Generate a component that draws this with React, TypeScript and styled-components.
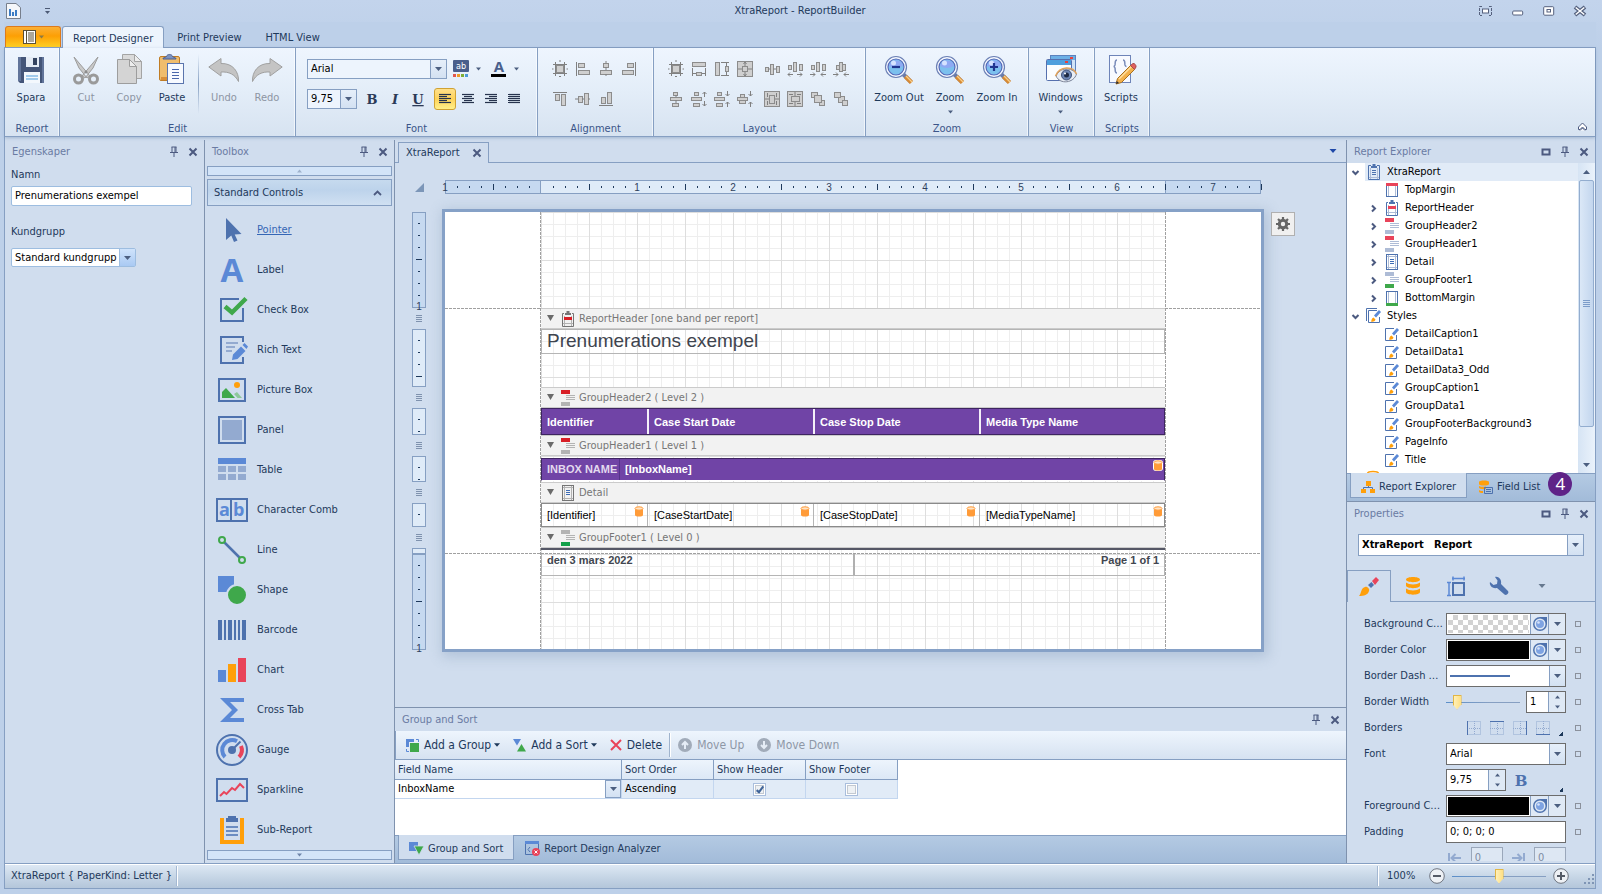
import React from 'react';
import styled, { createGlobalStyle, css } from 'styled-components';

const ui = '"DejaVu Sans Condensed", "DejaVu Sans", sans-serif';
const arial = '"Liberation Sans", Arial, sans-serif';

const c = {
  frame: '#bdd0e9',
  panel: '#d0ddee',
  line: '#869fc2',
  divider: '#7f92ae',
  text: '#1e395b',
  muted: '#6a7ba3',
  blue: '#4e72ae',
  sky: '#5b89d6',
  pale: '#93aad0',
  green: '#3fa84b',
  orange: '#ff9f0a',
  red: '#e9445a',
  purple: '#7044a6',
};

const GlobalStyle = createGlobalStyle`
  *, *::before, *::after { box-sizing: border-box; }
  body { margin: 0; background: ${c.frame}; }
  button, input, select { font: inherit; color: inherit; margin: 0; }
  svg { display: block; flex: none; overflow: visible; }
`;

/* ---------- window frame ---------- */

const Window = styled.div`
  display: flex;
  flex-direction: column;
  height: 100vh;
  min-height: 720px;
  padding: 0 6px 5px 4px;
  font: 11px/14px ${ui};
  color: ${c.text};
  background: linear-gradient(#c3d4ec, ${c.frame} 48px);
`;

const TitleBar = styled.header`
  display: grid;
  grid-template-columns: 150px 1fr 150px;
  align-items: center;
  height: 22px;
  flex: none;
`;

const QuickAccess = styled.div`
  display: flex;
  align-items: center;
  gap: 24px;
  padding-left: 1px;
`;

const WindowTitle = styled.h1`
  margin: 0;
  font: inherit;
  text-align: center;
`;

const WindowButtons = styled.div`
  display: flex;
  justify-content: flex-end;
  gap: 19px;
  padding-right: 10px;
`;

const PlainButton = styled.button`
  display: flex;
  align-items: center;
  justify-content: center;
  flex: none;
  padding: 0;
  border: 0;
  background: none;
`;

const Body = styled.div`
  display: flex;
  flex-direction: column;
  flex: 1;
  min-height: 0;
  border: solid ${c.line};
  border-width: 0 1px 1px;
  background: ${c.panel};
`;

/* ---------- ribbon ---------- */

const RibbonTabs = styled.nav`
  display: flex;
  align-items: flex-end;
  height: 26px;
  margin: 0 -1px;
  padding-left: 1px;
  flex: none;
  background: ${c.frame};
  border-bottom: 1px solid ${c.line};
`;

const FileButton = styled.button`
  display: flex;
  align-items: center;
  justify-content: center;
  gap: 2px;
  width: 56px;
  height: 21px;
  padding: 0;
  border: 1px solid #dd7a1c;
  border-bottom: 0;
  border-radius: 3px 3px 0 0;
  background: linear-gradient(#fbb035, #fd9f04 45%, #fecf24);
`;

const RibbonTab = styled.button<{ $active?: boolean }>`
  height: 22px;
  padding: 3px 10px 0;
  margin-left: ${(p) => (p.$active ? 1 : 0)}px;
  margin-right: 2px;
  border: 1px solid transparent;
  border-bottom: 0;
  background: none;
  ${(p) =>
    p.$active &&
    css`
      margin-bottom: -1px;
      border-color: ${c.line};
      border-radius: 3px 3px 0 0;
      background: #edf4fd;
    `}
`;

const Ribbon = styled.div`
  display: flex;
  height: 89px;
  flex: none;
  background: linear-gradient(#eef5fe, #e3edf8 50%, #d7e3f1);
  border-bottom: 1px solid ${c.line};
  box-shadow: 0 1px 3px rgba(90, 120, 160, 0.4);
`;

const Group = styled.section<{ $w: number }>`
  display: flex;
  flex-direction: column;
  justify-content: space-between;
  width: ${(p) => p.$w}px;
  flex: none;
  border-right: 1px solid ${c.line};
  box-shadow: inset -1px 0 rgba(255, 255, 255, 0.6);
`;

const GroupName = styled.div`
  text-align: center;
  color: #3b5589;
`;

const BigRow = styled.div`
  display: flex;
  justify-content: center;
  padding: 6px 2px 0 0;
`;

const BigButton = styled.button<{ $w?: number }>`
  display: flex;
  flex-direction: column;
  align-items: center;
  gap: 5px;
  width: ${(p) => p.$w ?? 43}px;
  padding: 0;
  border: 0;
  background: none;
  white-space: nowrap;
  &:disabled { color: #8d95a3; }
`;

const RibbonRule = styled.span`
  width: 1px;
  height: 60px;
  margin: 0 4px;
  background: linear-gradient(transparent, ${c.line}, transparent);
`;

const ToolGrid = styled.div<{ $pad: number }>`
  display: flex;
  flex-direction: column;
  gap: 8px;
  padding: 10px 0 0 ${(p) => p.$pad}px;
`;

const ToolRow = styled.div`
  display: flex;
  align-items: center;
  height: 22px;
  gap: 1px;
`;

const ToolButton = styled.button<{ $on?: boolean }>`
  display: flex;
  align-items: center;
  justify-content: center;
  width: 22px;
  height: 22px;
  padding: 0;
  border: 1px solid ${(p) => (p.$on ? '#d0a233' : 'transparent')};
  border-radius: 3px;
  background: ${(p) => (p.$on ? 'linear-gradient(#ffe08a, #ffd35a 50%, #fff08a)' : 'none')};
`;

const ToolGap = styled.span<{ $w: number }>`
  width: ${(p) => p.$w}px;
`;

const Collapse = styled.div`
  display: flex;
  flex: 1;
  align-items: flex-end;
  justify-content: flex-end;
  padding: 0 7px 4px;
`;

/* ---------- form parts ---------- */

const Combo = styled.span<{ $w?: number; $h?: number; $edge?: string; $bg?: string; $radius?: number }>`
  display: flex;
  width: ${(p) => (p.$w ? `${p.$w}px` : '100%')};
  height: ${(p) => p.$h ?? 20}px;
  flex: none;
  border: 1px solid ${(p) => p.$edge ?? c.line};
  border-radius: ${(p) => p.$radius ?? 0}px;
  background: ${(p) => p.$bg ?? '#fff'};
  color: #000;
`;

const Select = styled.select<{ $bold?: boolean }>`
  appearance: none;
  flex: 1;
  min-width: 0;
  padding: 0 0 0 3px;
  border: 0;
  outline: 0;
  border-radius: 0;
  background: none;
  font-weight: ${(p) => (p.$bold ? 700 : 400)};
`;

const DropArrow = styled.span<{ $w?: number; $edge?: string; $vivid?: boolean }>`
  display: flex;
  align-items: center;
  justify-content: center;
  width: ${(p) => p.$w ?? 16}px;
  flex: none;
  border-left: 1px solid ${(p) => p.$edge ?? c.line};
  background: ${(p) => (p.$vivid ? 'linear-gradient(#cfe3fb, #a9c9f3)' : 'linear-gradient(#e6effa, #d3e1f2)')};
  pointer-events: none;
`;

const TextInput = styled.input`
  flex: 1;
  min-width: 0;
  width: 100%;
  padding: 0 3px;
  border: 0;
  outline: 0;
  background: none;
  color: #000;
`;

/* ---------- panels ---------- */

const Main = styled.main`
  display: flex;
  flex: 1;
  min-height: 0;
  padding-top: 3px;
`;

const Panel = styled.section<{ $w: number }>`
  display: flex;
  flex-direction: column;
  width: ${(p) => p.$w}px;
  flex: none;
  min-height: 0;
  border-right: 1px solid ${c.divider};
`;

const PanelHead = styled.header`
  display: flex;
  align-items: center;
  height: 23px;
  flex: none;
  gap: 9px;
  padding: 1px 6px 0 7px;
  color: ${c.muted};
`;

const PanelTitle = styled.h2`
  flex: 1;
  margin: 0;
  font: inherit;
`;

const Field = styled.label<{ $gap: number }>`
  display: flex;
  flex-direction: column;
  gap: ${(p) => p.$gap}px;
  padding: 5px 12px 14px 6px;
`;

const ToolboxScroll = styled.button`
  display: flex;
  align-items: center;
  justify-content: center;
  height: 10px;
  flex: none;
  margin: 3px 2px;
  padding: 0;
  border: 1px solid ${c.line};
  background: #d3e4f8;
`;

const ToolboxGroup = styled.button`
  display: flex;
  align-items: center;
  justify-content: space-between;
  height: 27px;
  flex: none;
  margin: 0 2px;
  padding: 0 9px 0 6px;
  border: 1px solid ${c.line};
  background: linear-gradient(#c6daee, #bdd3eb 40%, #d0e0f2);
`;

const ToolboxList = styled.ul`
  flex: 1;
  min-height: 0;
  overflow: hidden;
  margin: 0;
  padding: 4px 0 0 11px;
  list-style: none;
`;

const ToolboxItem = styled.button<{ $link?: boolean }>`
  display: flex;
  align-items: center;
  gap: 9px;
  height: 40px;
  padding: 0;
  border: 0;
  background: none;
  color: ${(p) => (p.$link ? '#3566b5' : c.text)};
  text-decoration: ${(p) => (p.$link ? 'underline' : 'none')};
`;

/* ---------- document ---------- */

const Center = styled.div`
  display: flex;
  flex-direction: column;
  flex: 1;
  min-width: 0;
`;

const DocTabs = styled.div`
  display: flex;
  align-items: flex-end;
  justify-content: space-between;
  height: 23px;
  flex: none;
  padding: 0 7px 0 3px;
  border-bottom: 1px solid ${c.line};
`;

const DocTab = styled.div`
  display: flex;
  align-items: center;
  gap: 12px;
  height: 21px;
  margin-bottom: -1px;
  padding: 0 6px 0 7px;
  border: 1px solid ${c.line};
  border-bottom: 0;
  background: ${c.panel};
`;

const DocMenu = styled(PlainButton)`
  width: 12px;
  height: 22px;
`;

const Canvas = styled.div`
  display: grid;
  grid-template-columns: 14px max-content max-content;
  grid-template-rows: 14px max-content;
  gap: 15px 16px;
  flex: 1;
  min-height: 0;
  overflow: hidden;
  padding: 17px 0 0 17px;
`;

const HRuler = styled.div`
  margin-left: 3px;
`;

const VRuler = styled.div`
  display: flex;
  flex-direction: column;
  margin-top: 3px;
`;

const VGrip = styled.div`
  display: flex;
  align-items: center;
  justify-content: center;
  height: 21px;
`;

const Paper = styled.div`
  display: grid;
  grid-template-columns: 96px 624px 96px;
  width: 822px;
  border: 3px solid #86a1c7;
  background: #fff;
  box-shadow: 2px 3px 12px 2px rgba(110, 135, 170, 0.3);
`;

const dash = '#a0a0a0';
const Margin = styled.div<{ $side: 'left' | 'right' }>`
  display: grid;
  grid-template-rows: 97px 1fr 95px;
  background: repeating-linear-gradient(${dash} 0 3px, transparent 3px 4px)
    ${(p) => (p.$side === 'left' ? 'right' : 'left')} / 1px 100% no-repeat;
`;

const MarginPart = styled.div<{ $dashed?: boolean }>`
  background: ${(p) =>
    p.$dashed ? `repeating-linear-gradient(90deg, ${dash} 0 3px, transparent 3px 4px) bottom / 100% 1px no-repeat` : 'none'};
`;

const Band = styled.div<{ $h: number }>`
  display: flex;
  flex-direction: column;
  height: ${(p) => p.$h}px;
  background:
    linear-gradient(90deg, #dedede 1px, transparent 1px) 0 0 / 48px 48px,
    linear-gradient(#dedede 1px, transparent 1px) 0 0 / 48px 48px,
    linear-gradient(90deg, #eeeeee 1px, transparent 1px) 0 0 / 12px 12px,
    linear-gradient(#eeeeee 1px, transparent 1px) 0 0 / 12px 12px;
`;

const BandHead = styled.div`
  display: flex;
  align-items: center;
  gap: 6px;
  height: 21px;
  padding-left: 6px;
  border: solid #cbcbcb;
  border-width: 1px 0;
  background: #f2f2f2;
  color: #767676;
`;

const BandName = styled.span`
  margin-left: -3px;
`;

const ReportTitle = styled.div`
  height: 25px;
  padding-left: 5px;
  border: 1px solid #b5b5b5;
  font: 19px/22px ${arial};
  color: #3e444e;
`;

const bandTable = css`
  width: 100%;
  table-layout: fixed;
  border-spacing: 0;
  font: 11px/14px ${arial};
  text-align: left;
`;

const HeaderTable = styled.table`
  ${bandTable}
  height: 27px;
  border: 1px solid #3e2561;
  background: ${c.purple};
  color: #fff;
  th { padding: 0 5px; font-weight: 700; }
  th + th { border-left: 2px solid #f4f0f8; }
`;

const GroupTable = styled.table`
  ${bandTable}
  height: 23px;
  margin-top: 2px;
  border: 1px solid #3e2561;
  border-bottom: 1px solid #fff;
  background: ${c.purple};
  color: #fff;
  font-weight: 700;
  th, td { position: relative; padding: 0 5px 2px; white-space: nowrap; }
  th { color: #e3d9ee; padding-right: 0; }
  td { border-left: 1px solid #56338a; }
`;

const DetailTable = styled.table`
  ${bandTable}
  height: 24px;
  border: 1px solid #8a8a8a;
  color: #000;
  td { position: relative; padding: 0 5px; }
  td + td { padding-left: 6px; border-left: 1px solid #b5b5b5; }
`;

const Bound = styled.span<{ $light?: boolean }>`
  position: absolute;
  top: ${(p) => (p.$light ? 1 : 2)}px;
  right: 3px;
  border-radius: 3px;
  background: ${(p) => (p.$light ? '#fff' : 'none')};
  td:last-child > & { right: 1px; }
`;

const FooterRule = styled.div`
  height: 2px;
  background: #555766;
`;

const DashRule = styled.div`
  height: 1px;
  margin-top: 3px;
  background: repeating-linear-gradient(90deg, ${dash} 0 3px, transparent 3px 4px);
`;

const FooterCells = styled.div`
  display: grid;
  grid-template-columns: 1fr 1fr;
  height: 22px;
  border: 1px solid #b5b5b5;
  border-top: 0;
  font: 700 11px/13px ${arial};
  color: #41464f;
`;

const FooterCell = styled.div<{ $end?: boolean }>`
  padding: 0 5px;
  text-align: ${(p) => (p.$end ? 'right' : 'left')};
  border-left: ${(p) => (p.$end ? '2px solid #b0b0b0' : '0')};
`;

const SmartTag = styled.button`
  display: flex;
  align-items: center;
  justify-content: center;
  width: 24px;
  height: 24px;
  margin: 3px 0 0 -12px;
  padding: 0;
  border: 1px solid #b0b0b0;
  background: #f0f0f0;
`;

/* ---------- group and sort ---------- */

const BottomPanel = styled.section`
  display: flex;
  flex-direction: column;
  height: 156px;
  flex: none;
  border-top: 1px solid ${c.divider};
`;

const Toolbar = styled.div`
  display: flex;
  align-items: center;
  height: 29px;
  flex: none;
  gap: 13px;
  padding-left: 10px;
  border: 1px solid ${c.line};
  border-width: 0 0 1px 1px;
  background: linear-gradient(#eef5fd, #d6e2f1);
  font-size: 12px;
`;

const ToolbarButton = styled.button`
  display: flex;
  align-items: center;
  gap: 5px;
  padding: 0;
  border: 0;
  background: none;
  &:disabled { color: #8e97a6; }
`;

const MenuCaret = styled.span`
  margin-left: -2px;
`;

const ToolbarRule = styled.span`
  width: 2px;
  height: 24px;
  margin: 0 -6px;
  background: linear-gradient(90deg, #9fb3cd 50%, #fff 50%);
`;

const TableArea = styled.div`
  flex: 1;
  background: #fff;
`;

const FieldTable = styled.table`
  width: 503px;
  table-layout: fixed;
  border-spacing: 0;
  text-align: left;
  tr { height: 19px; }
  th, td { padding: 0 3px; font-weight: 400; }
  th {
    height: 20px;
    border-right: 1px solid ${c.line};
    border-bottom: 1px solid ${c.line};
    background: linear-gradient(#edf4fc, #dce8f6);
  }
  td {
    border-right: 1px solid #c3d6ef;
    border-bottom: 1px solid #c3d6ef;
    background: #e1ebf7;
    color: #000;
  }
  td:first-child { padding: 0; background: #fff; }
`;

const FieldCell = styled.div`
  display: flex;
  height: 18px;
`;

const CellArrow = styled(DropArrow)`
  border: 1px solid ${c.line};
`;

const Check = styled.input`
  appearance: none;
  position: relative;
  display: block;
  width: 13px;
  height: 13px;
  margin: 0 auto;
  border: 1px solid #a9bedd;
  background: #eef1f4;
  box-shadow: inset 0 0 0 1px #fff, inset 0 0 0 2px #c3c9d1;
  &:checked::after {
    content: '';
    position: absolute;
    left: 4px;
    top: 1px;
    width: 4px;
    height: 8px;
    border: solid #3f6499;
    border-width: 0 2px 2px 0;
    transform: rotate(38deg);
  }
`;

const TabStrip = styled.div`
  display: flex;
  height: 28px;
  flex: none;
  padding-left: 3px;
  border-top: 1px solid ${c.line};
  background: linear-gradient(#b4cae3, #a2bbd9);
`;

const StripTab = styled.button<{ $active?: boolean }>`
  display: flex;
  align-items: center;
  gap: 4px;
  height: 25px;
  margin-top: -1px;
  padding: 3px 10px 0;
  white-space: nowrap;
  border: 1px solid ${(p) => (p.$active ? c.line : 'transparent')};
  border-top: 0;
  background: ${(p) => (p.$active ? c.panel : 'none')};
`;

/* ---------- right side ---------- */

const RightSide = styled.aside`
  display: flex;
  flex-direction: column;
  width: 249px;
  flex: none;
  border-left: 1px solid ${c.divider};
`;

const HalfPanel = styled.section<{ $ruled?: boolean }>`
  display: flex;
  flex-direction: column;
  flex: 1 1 0;
  min-height: 0;
  overflow: hidden;
  border-top: ${(p) => (p.$ruled ? `1px solid ${c.divider}` : '0')};
`;

const TreeArea = styled.div`
  display: flex;
  flex: 1;
  min-height: 0;
  background: #fff;
`;

const Tree = styled.ul`
  flex: 1;
  overflow: hidden;
  margin: 0;
  padding: 0;
  list-style: none;
  color: #000;
`;

const TreeRow = styled.li<{ $level: number; $selected?: boolean }>`
  display: flex;
  align-items: center;
  gap: 5px;
  height: 18px;
  padding-left: ${(p) => 4 + p.$level * 18}px;
  background: ${(p) => (p.$selected ? 'linear-gradient(90deg, #fff 18px, #e1ebf7 18px)' : 'none')};
`;

const TreeToggle = styled.span`
  display: flex;
  width: 10px;
`;

const ScrollBar = styled.div`
  display: flex;
  flex-direction: column;
  align-items: center;
  width: 17px;
  background: linear-gradient(90deg, #d6e4f4, #eaf2fb);
`;

const ScrollEnd = styled(PlainButton)`
  width: 17px;
  height: 17px;
`;

const ScrollThumb = styled.div`
  display: flex;
  align-items: center;
  justify-content: center;
  width: 15px;
  height: 247px;
  margin-bottom: auto;
  border: 1px solid #93adcf;
  border-radius: 2px;
  background: linear-gradient(90deg, #dbe8f7, #c3d6ee);
`;

const Badge = styled.span`
  display: flex;
  align-items: center;
  justify-content: center;
  width: 24px;
  height: 24px;
  margin: -2px 0 0 -3px;
  border-radius: 50%;
  background: #5f2387;
  color: #fff;
  font: 17px/24px "Noto Sans", sans-serif;
`;

const ObjectPicker = styled.div`
  flex: none;
  padding: 9px 11px 14px;
`;

const CategoryTabs = styled.div`
  display: flex;
  height: 32px;
  flex: none;
  border-bottom: 1px solid ${c.line};
`;

const CategoryTab = styled.button<{ $active?: boolean }>`
  display: flex;
  align-items: center;
  justify-content: center;
  width: ${(p) => (p.$active ? 44 : 43)}px;
  margin-bottom: ${(p) => (p.$active ? -1 : 0)}px;
  padding: 0;
  border: solid ${(p) => (p.$active ? c.line : 'transparent')};
  border-width: 1px 1px 0;
  background: ${(p) => (p.$active ? c.panel : 'none')};
`;

const PropList = styled.div`
  flex: 1;
  min-height: 0;
  overflow: hidden;
  margin-bottom: 2px;
  padding-top: 9px;
`;

const PropRow = styled.div`
  display: grid;
  grid-template-columns: 80px 120px 6px;
  column-gap: 2px;
  align-items: center;
  height: 26px;
  padding-left: 17px;
`;

const PropEditor = styled.div`
  display: flex;
  align-items: center;
  justify-content: space-between;
`;

const PropName = styled.label`
  overflow: hidden;
  white-space: nowrap;
  text-overflow: ellipsis;
`;

const Marker = styled.span`
  width: 6px;
  height: 6px;
  margin-left: 7px;
  border: 1px solid #8b919c;
`;

const Swatch = styled.span<{ $checker?: boolean }>`
  flex: 1;
  margin: 1px;
  background: ${(p) =>
    p.$checker ? 'repeating-conic-gradient(#d2d2d2 0 25%, #fff 0 50%) 0 0 / 10px 10px' : '#000'};
`;

const SwatchButton = styled.button`
  display: flex;
  align-items: center;
  justify-content: center;
  width: 18px;
  padding: 0;
  border: 0;
  border-left: 1px solid ${c.line};
  background: #dfe9f5;
`;

const SwatchArrow = styled(SwatchButton)`
  width: 17px;
`;

const DashSample = styled.span`
  flex: 1;
  align-self: center;
  height: 2px;
  margin: 0 39px 0 3px;
  background: ${c.blue};
`;

const SpinButtons = styled.span`
  display: flex;
  flex-direction: column;
  width: 17px;
  flex: none;
  border-left: 1px solid ${c.line};
  background: #dfe9f5;
`;

const SpinButton = styled(PlainButton)`
  height: 10px;
`;

const Slider = styled.input<{ $w: number }>`
  appearance: none;
  width: ${(p) => p.$w}px;
  height: 18px;
  background: linear-gradient(90deg, #5c8fc9, ${c.line} 60%) center / 100% 1px no-repeat;
  &::-webkit-slider-thumb {
    appearance: none;
    width: 9px;
    height: 15px;
    border: 1px solid #e2b644;
    background: linear-gradient(90deg, #fff0b8, #ffdf82);
    clip-path: polygon(0 0, 100% 0, 100% 65%, 50% 100%, 0 65%);
  }
`;

const BorderButtons = styled.div`
  display: flex;
  gap: 9px;
  padding-left: 21px;
`;

const CornerMark = styled.span`
  align-self: flex-end;
  width: 4px;
  height: 4px;
  margin: 0 3px -1px 0;
  background: linear-gradient(135deg, transparent 50%, ${c.text} 50%);
`;

const StatusBar = styled.footer`
  display: flex;
  align-items: center;
  height: 25px;
  flex: none;
  border-top: 1px solid ${c.line};
  box-shadow: inset 0 1px #fff;
  background: linear-gradient(#dfe9f5, #c8d7e7 50%, #b4c6da);
`;

const StatusCell = styled.span`
  padding-left: 6px;
  width: 171px;
  white-space: nowrap;
`;

const StatusRule = styled.span`
  width: 2px;
  height: 20px;
  background: linear-gradient(90deg, #a4b8d2 50%, #fff 50%);
`;

const ZoomBox = styled.div`
  display: flex;
  align-items: center;
  gap: 7px;
  margin-left: auto;
`;

const ZoomValue = styled.span`
  width: 35px;
  margin: 0 0 0 1px;
`;

/* ---------- icons ---------- */

type IcoProps = { w?: number; h?: number; box?: string; children: React.ReactNode };
const Ico = ({ w = 16, h = w, box, children }: IcoProps) => (
  <svg width={w} height={h} viewBox={box ?? `0 0 ${w} ${h}`} fill="none" aria-hidden="true">
    {children}
  </svg>
);

const Caret = ({ fill = '#4c5f80', up = false, w = 7 }: { fill?: string; up?: boolean; w?: number }) => (
  <Ico w={w} h={4} box="0 0 7 4">
    <path d={up ? 'M0 4L3.5 0L7 4z' : 'M0 0H7L3.5 4z'} fill={fill} />
  </Ico>
);

const pinIcon = (
  <Ico w={10} h={12}>
    <path d="M2.5 1H7.5M3 1V6.500M7 1V6.500M6 1V6.500M1 6.500H9M5 7V11" stroke="#4c5a80" />
  </Ico>
);
const closeIcon = (
  <Ico w={10} h={10}>
    <path d="M1.500 1.500L8.500 8.500M8.500 1.500L1.500 8.500" stroke="#4c5a80" strokeWidth="2" />
  </Ico>
);
const maxIcon = (
  <Ico w={10} h={10}>
    <rect x="1.500" y="2.500" width="7" height="5" stroke="#4c5a80" strokeWidth="2" />
  </Ico>
);

const toolIcons: Record<string, React.ReactNode> = {
  Pointer: <path d="M10 4L25.500 20L18.700 20.500L21.500 26.500L18 28L15.300 21.500L10 26z" fill={c.blue} />,
  Label: (
    <text x="16" y="28" textAnchor="middle" fontFamily="Open Sans" fontWeight="700" fontSize="33" fill={c.sky}>A</text>
  ),
  'Check Box': (
    <>
      <path d="M23 5H5V27H27V14" stroke={c.blue} strokeWidth="2" />
      <path d="M9 12.500L16 19L30.500 4.500" stroke={c.panel} strokeWidth="7" />
      <path d="M9 12.500L16 18.500L30 4.500" stroke={c.green} strokeWidth="4.500" />
    </>
  ),
  'Rich Text': (
    <>
      <path d="M27 8V3H5V29H27V23" stroke={c.blue} strokeWidth="2" />
      <path d="M10 9H22M10 13H19M10 17H16" stroke={c.pale} strokeWidth="2" />
      <path d="M16 26L17 20.500L25 12.500L29.500 17L21.500 25zM26.500 11L28.500 9L32 12.500L30.500 15z" fill={c.sky} />
    </>
  ),
  'Picture Box': (
    <>
      <rect x="3" y="5" width="26" height="22" stroke={c.blue} strokeWidth="2" />
      <circle cx="21" cy="11" r="3" fill={c.orange} />
      <path d="M6 24V18L10 14L19 24z" fill={c.green} />
      <path d="M18 20L21 18L26 24H21.500z" fill="#8cc79a" />
    </>
  ),
  Panel: (
    <>
      <rect x="3" y="3" width="26" height="26" stroke={c.blue} strokeWidth="2" />
      <rect x="6" y="6" width="20" height="20" fill={c.pale} />
    </>
  ),
  Table: (
    <>
      <rect x="2" y="4" width="28" height="6" fill={c.sky} />
      <path d="M2 15H10M12 15H20M22 15H30M2 23H10M12 23H20M22 23H30" stroke={c.pale} strokeWidth="6" />
    </>
  ),
  'Character Comb': (
    <>
      <rect x="1" y="5" width="30" height="22" stroke={c.blue} strokeWidth="2" />
      <path d="M15 5V27" stroke={c.blue} strokeWidth="2" />
      <text x="3" y="22" fontFamily="Open Sans" fontWeight="700" fontSize="18" fill={c.sky}>a</text>
      <text x="17" y="22" fontFamily="Open Sans" fontWeight="700" fontSize="18" fill={c.sky}>b</text>
    </>
  ),
  Line: (
    <>
      <path d="M8 8L24 24" stroke={c.blue} strokeWidth="2.500" />
      <circle cx="6" cy="6" r="3" stroke={c.green} strokeWidth="2" />
      <circle cx="26" cy="26" r="3" stroke={c.green} strokeWidth="2" />
    </>
  ),
  Shape: (
    <>
      <rect x="2" y="2" width="16" height="16" fill={c.sky} />
      <circle cx="21" cy="21" r="10" fill={c.green} stroke={c.panel} strokeWidth="2" />
    </>
  ),
  Barcode: <path d="M2 6H6V26H2zM8 6H10V26H8zM12 6H16V26H12zM18 6H20V26H18zM22 6H24V26H22zM26 6H30V26H26z" fill={c.blue} />,
  Chart: (
    <>
      <rect x="2" y="16" width="8" height="12" fill={c.sky} />
      <rect x="12" y="10" width="8" height="18" fill={c.orange} />
      <rect x="22" y="4" width="8" height="24" fill={c.red} />
    </>
  ),
  'Cross Tab': <path d="M4 4H28V8H14L22 16L14 24H28V28H4L16 16z" fill={c.sky} />,
  Gauge: (
    <>
      <circle cx="16" cy="16" r="15" stroke={c.blue} strokeWidth="2" />
      <path d="M9 23A10 10 0 0 1 21 7.300" stroke={c.sky} strokeWidth="4" />
      <path d="M25 12A10 10 0 0 1 23 23" stroke={c.red} strokeWidth="4" />
      <path d="M16 16L24.500 7.500" stroke={c.blue} strokeWidth="2" />
      <circle cx="16" cy="16" r="4" fill={c.blue} />
    </>
  ),
  Sparkline: (
    <>
      <rect x="1" y="5" width="30" height="22" stroke={c.blue} strokeWidth="2" />
      <path d="M4 22L8 18L10.500 20L16 14L19 16L24 10L28 14" stroke={c.red} strokeWidth="2" />
    </>
  ),
  'Sub-Report': (
    <>
      <path d="M8 4H4V30H28V4H24V26H8z" fill={c.orange} />
      <path d="M10 4H12V2H20V4H22V8H10z" fill={c.blue} />
      <path d="M10 13H22M10 17H22M10 21H22" stroke="#6a8cc2" strokeWidth="2" />
    </>
  ),
};

const SaveIcon = () => (
  <Ico w={32}>
    <path d="M3 3H29V29H5L3 27z" fill="#445578" />
    <path d="M3 3H6V27H3zM27 3H29V29H27z" fill="#61749a" />
    <path d="M11 3H24V13H11z" fill="#e4ebf5" />
    <rect x="18" y="4" width="4" height="7" fill="#34435f" />
    <rect x="9" y="18" width="16" height="11" fill="#f3f8fd" />
    <path d="M11 22H23M11 25H23" stroke="#4f9ddb" />
  </Ico>
);
const CutIcon = () => (
  <Ico w={32}>
    <path d="M4 3L20 22L17 24L9 14zM28 3L12 22L15 24L23 14z" fill="#c9c9c9" stroke="#9c9c9c" />
    <circle cx="8.500" cy="25" r="4" stroke="#9a9a9a" strokeWidth="3" />
    <circle cx="23.500" cy="25" r="4" stroke="#9a9a9a" strokeWidth="3" />
    <circle cx="16" cy="18" r="1.500" fill="#8d8d8d" />
  </Ico>
);
const CopyIcon = () => (
  <Ico w={32}>
    <path d="M9.500 .5H21.500L28.500 7.500V24.500H9.500z" fill="#dadada" stroke="#a4a4a4" />
    <path d="M4.500 5.500H16.500L23.500 12.500V29.500H4.500z" fill="#d4d4d4" stroke="#9d9d9d" />
    <path d="M16.500 5.500V12.500H23.500z" fill="#ededed" stroke="#9d9d9d" />
    <path d="M21.500 .5V7.500H28.500z" fill="#ededed" stroke="#a4a4a4" />
  </Ico>
);
const PasteIcon = () => (
  <Ico w={32}>
    <rect x="3.500" y="2.500" width="20" height="24" rx="1.500" fill="#f0bd6c" stroke="#c07c24" />
    <rect x="5" y="23" width="17" height="3" fill="#d98f38" />
    <path d="M7 5C7 3 9 4 10.500 2.500C11 -.2 16 -.2 16.500 2.500C18 4 20 3 20 5z" fill="#7d93c0" stroke="#4a5f92" />
    <rect x="11.500" y="9.500" width="16" height="20" fill="#f7faff" stroke="#5a74ad" />
    <path d="M16 15.500H23M16 18.500H23M16 21.500H23M16 24.500H23" stroke="#4a67ab" />
  </Ico>
);
const UndoIcon = ({ flip = false }: { flip?: boolean }) => (
  <Ico w={32}>
    <g transform={flip ? 'matrix(-1 0 0 1 32 0)' : undefined}>
      <path d="M.8 13L13 4.500V9.500C25 9 31 18 30.500 27.500C27 20.500 21 17.500 13 18V22z" fill="#c4c4c4" stroke="#a0a0a0" strokeLinejoin="round" />
    </g>
  </Ico>
);
const ZoomIcon = ({ sign }: { sign?: 'in' | 'out' }) => (
  <Ico w={32}>
    <path d="M20 20L28 28" stroke="#6b7ba8" strokeWidth="4" />
    <path d="M22.500 22.500L28.500 28.500" stroke="#d78a34" strokeWidth="4.500" />
    <path d="M23 22L29 28" stroke="#f7cf8a" strokeWidth="1.300" />
    <circle cx="13" cy="13" r="10.500" fill="#f6f9ff" stroke="#6c80b5" strokeWidth="1.200" />
    <circle cx="13" cy="13" r="8" fill="#7cc0ee" stroke="#5668b8" strokeWidth="1.200" />
    <path d="M6 12A7.200 7.200 0 0 1 20 12Q13 16 6 12" fill="#8fa9f3" />
    <circle cx="10.500" cy="9" r="2.500" fill="#d5e3ff" />
    {sign && <path d={sign === 'in' ? 'M9 13H17M13 9V17' : 'M9 13H17'} stroke="#20358f" strokeWidth="2.200" />}
  </Ico>
);
const WindowsIcon = () => (
  <Ico w={32}>
    <rect x="5.500" y="1.500" width="25" height="19" fill="#cfe4f8" stroke="#5d82bd" />
    <rect x="6" y="2" width="24" height="4" fill="#6db0e6" />
    <rect x="1.500" y="5.500" width="25" height="21" rx="1" fill="#fbfdff" stroke="#5670ae" />
    <rect x="2" y="6" width="24" height="5" fill="#4f9fdd" />
    <rect x="20" y="7" width="3" height="2" fill="#e8413c" />
    <rect x="25" y="3" width="3" height="2" fill="#e8413c" />
    <path d="M11 22C15 13 27 13 31.500 20C29 29 15 31 11 22z" fill="#e8edf5" stroke="#7d8598" />
    <path d="M10.500 22C15 11.500 28 12 31.500 20" stroke="#e0a25c" strokeWidth="1.600" />
    <circle cx="21.500" cy="21" r="5" fill="#6c86b4" stroke="#40547c" />
    <circle cx="21.500" cy="21" r="2.500" fill="#1d2a45" />
    <circle cx="20" cy="19.500" r="1" fill="#fff" />
  </Ico>
);
const ScriptsIcon = () => (
  <Ico w={32}>
    <rect x="4.500" y="1.500" width="21" height="27" fill="#f8faff" stroke="#6e84b8" />
    <path d="M12 6C9.500 6 10.500 9 10 11C9.500 12.500 8.500 12.500 8.500 12.500C8.500 12.500 9.500 12.500 10 14C10.500 16 9.500 19 12 19M18 6C20.500 6 19.500 9 20 11C20.500 12.500 21.500 12.500 21.500 12.500" stroke="#7a8cba" strokeWidth="1.500" />
    <path d="M11 30L12.500 24.500L25.500 11.500L29.500 15.500L16.500 28.500z" fill="#f3b14c" stroke="#a8701f" />
    <path d="M14 25L26.500 12.500" stroke="#ffe0a0" strokeWidth="1.500" />
    <path d="M25.500 11.500L28 9.500C29.500 9 31.500 11.500 31 13L29.500 15.500z" fill="#e2605f" stroke="#a64a4a" />
    <path d="M11 30L11.800 27L14 29z" fill="#2b2b33" />
  </Ico>
);

const g = { fill: '#cfcfcf', stroke: '#8c8c8c' };
const Boxes = ({ r, p }: { r: number[][]; p?: string }) => (
  <Ico>
    {r.map((q, i) => (
      <rect key={i} x={q[0] + 0.5} y={q[1] + 0.5} width={q[2]} height={q[3]} {...g} />
    ))}
    {p && <path d={p} stroke="#808080" />}
  </Ico>
);

const arrowsOut = 'M1 13.500H6M3 11.500L1 13.500L3 15.500M10 13.500H15M13 11.500L15 13.500L13 15.500';
const arrowsIn = 'M0 13.500H5M3 11.500L5 13.500L3 15.500M11 13.500H16M13 11.500L11 13.500L13 15.500';
const arrowsOutV = 'M13.500 1V6M11.500 3L13.500 1L15.500 3M13.500 10V15M11.500 13L13.500 15L15.500 13';
const arrowsInV = 'M13.500 0V5M11.500 3L13.500 5L15.500 3M13.500 11V16M11.500 13L13.500 11L15.500 13';

const alignIcons = [
  [
    <Boxes key="a" r={[[4, 4, 7, 7]]} p="M3.500 1V15M12.500 1V15M1 3.500H15M1 12.500H15M7 0H9M7 15.500H9M0 8H1.500M14.500 8H16" />,
    <Boxes key="b" r={[[3, 2, 6, 4], [3, 9, 11, 4]]} p="M1.500 1V15" />,
    <Boxes key="c" r={[[5, 2, 5, 4], [2, 9, 11, 4]]} p="M8 0V2M8 6V9M8 13V15" />,
    <Boxes key="d" r={[[6, 2, 6, 4], [1, 9, 11, 4]]} p="M14.500 1V15" />,
  ],
  [
    <Boxes key="a" r={[[3, 3, 4, 6], [9, 3, 4, 11]]} p="M1 1.500H15" />,
    <Boxes key="b" r={[[3, 5, 4, 6], [9, 2, 4, 11]]} p="M0 8H3M7 8H9M13 8H15" />,
    <Boxes key="c" r={[[3, 6, 4, 6], [9, 1, 4, 11]]} p="M1 14.500H15" />,
  ],
];
const layoutIcons = [
  [
    <Boxes key="a" r={[[4, 4, 7, 7]]} p="M3.500 1V15M12.500 1V15M1 3.500H15M1 12.500H15M7 0H9M7 15.500H9M0 8H1.500M14.500 8H16" />,
    <Boxes key="b" r={[[1, 1, 13, 4], [5, 11, 5, 3]]} p="M1.500 7V15M14.500 7V15M2 12.500H5M11 12.500H14" />,
    <Boxes key="c" r={[[1, 1, 4, 13], [11, 5, 3, 5]]} p="M7 1.500H15M7 14.500H15M12.500 2V5M12.500 11V14" />,
    <Boxes key="d" r={[[0, 0, 15, 15], [5, 5, 5, 5]]} p="M8 1V5M8 11V15M1 8H5M11 8H15M6.500 3L8 1L9.500 3M6.500 13L8 15L9.500 13" />,
    <Boxes key="e" r={[[1, 6, 3, 4], [6, 3, 3, 10], [12, 5, 3, 6]]} p="M4 8H6M9 8H12" />,
    <Boxes key="f" r={[[1, 4, 3, 4], [6, 1, 3, 9], [12, 3, 3, 6]]} p={arrowsOut} />,
    <Boxes key="g" r={[[1, 4, 3, 4], [6, 1, 3, 9], [12, 3, 3, 6]]} p={arrowsIn} />,
    <Boxes key="h" r={[[3, 4, 3, 4], [6, 1, 3, 9], [9, 3, 3, 6]]} p={arrowsIn} />,
  ],
  [
    <Boxes key="a" r={[[5, 1, 4, 3], [2, 6, 11, 3], [4, 12, 6, 3]]} p="M8 4V6M8 9V12" />,
    <Boxes key="b" r={[[3, 1, 4, 3], [0, 6, 10, 3], [2, 12, 6, 3]]} p={arrowsOutV} />,
    <Boxes key="c" r={[[3, 1, 4, 3], [0, 6, 10, 3], [2, 12, 6, 3]]} p={arrowsInV} />,
    <Boxes key="d" r={[[3, 3, 4, 3], [0, 6, 10, 3], [2, 9, 6, 3]]} p={arrowsInV} />,
    <Boxes key="e" r={[[0, 0, 15, 15], [5, 4, 5, 8]]} p="M3.500 2V6M3.500 10V14M12.500 2V6M12.500 10V14M1 8H5M11 8H15" />,
    <Boxes key="f" r={[[0, 0, 15, 15], [4, 5, 8, 5]]} p="M2 3.500H6M10 3.500H14M2 12.500H6M10 12.500H14M8 1V5M8 11V15" />,
    <Boxes key="g" r={[[1, 1, 6, 5], [9, 9, 5, 5], [4, 4, 7, 7]]} />,
    <Boxes key="h" r={[[5, 5, 6, 6], [1, 1, 6, 5], [9, 9, 5, 5]]} />,
  ],
];

const textLines = (left: number[], right: number[]) => (
  <Ico w={13} h={12}>
    {[1.5, 3.5, 5.5, 7.5, 9.5].map((y, i) => (
      <path key={y} d={`M${left[i]} ${y}H${right[i]}`} stroke="#26334d" strokeWidth="1.200" />
    ))}
  </Ico>
);

const bandSet = (tone: string, endTone: string, gray: string, frame: string) => ({
  report: (
    <Ico>
      <path d="M4 2.500H2.500V15.500H13.500V2.500H12" stroke={frame} />
      <path d="M5 2H6.500V0H9.500V2H11V4H5z" fill={frame} />
      <path d="M4.500 5V15M11.500 5V15M3 12.500H13" stroke={gray} />
      <rect x="4" y="6" width="8" height="3" fill={tone} />
    </Ico>
  ),
  header: (
    <Ico>
      <rect x="1" y="0" width="9" height="4" fill={tone} />
      <rect x="1" y="12" width="9" height="4" fill={gray} />
      <path d="M6 5.500H15M6 7.500H15M6 9.500H15" stroke={gray} />
    </Ico>
  ),
  detail: (
    <Ico>
      <rect x="2.500" y=".5" width="11" height="15" stroke={frame} />
      <path d="M4.500 1V15M11.500 1V15M3 2.500H13M3 13.500H13" stroke={gray} />
      <path d="M6 5.500H10M6 7.500H10M6 9.500H10" stroke="#3f6db5" />
    </Ico>
  ),
  footer: (
    <Ico>
      <rect x="1" y="0" width="9" height="4" fill={gray} />
      <rect x="1" y="12" width="9" height="4" fill={endTone} />
      <path d="M6 5.500H15M6 7.500H15M6 9.500H15" stroke={gray} />
    </Ico>
  ),
});
const treeBand = bandSet(c.red, c.green, '#aebcd6', c.blue);
const pageBand = bandSet('#d81f26', '#12a04a', '#b3b3b3', '#757575');

const MarginIcon = ({ bottom = false }: { bottom?: boolean }) => (
  <Ico>
    <rect x="2.500" y="1.500" width="11" height="13" stroke={c.blue} />
    <path d="M4.500 2V14M11.500 2V14" stroke="#aebcd6" />
    <rect x="2" y={bottom ? 13 : 1} width="12" height="3" fill={bottom ? c.green : c.red} />
  </Ico>
);
const ReportIcon = () => (
  <Ico>
    <path d="M5 1.500H2.500V15.500H13.500V1.500H11" stroke={c.blue} />
    <path d="M5 2H6.500V0H9.500V2H11V4H5z" fill={c.blue} />
    <path d="M4.500 4V15M11.500 4V15M3 13.500H13" stroke="#aebcd6" />
    <path d="M6 6.500H10M6 8.500H10M6 10.500H10" stroke={c.blue} />
  </Ico>
);
const StyleIcon = ({ stack = false }: { stack?: boolean }) => (
  <Ico>
    {stack && <path d="M11 .5H.5V13" stroke={c.blue} />}
    <path d="M12.500 9V14.500H1.500V2.500H10" stroke={c.blue} transform={stack ? 'translate(1 0)' : undefined} />
    <path d="M9 8.500L14 3" stroke={c.sky} strokeWidth="2.800" />
    <path d="M5 13.500C6 12.500 5 10.500 7.500 9.500L9.500 11.500C9 13.500 7 14 5 13.500z" fill={c.orange} />
  </Ico>
);
const DbIcon = ({ w = 10, h = 11, fill = '#ff9b38' }: { w?: number; h?: number; fill?: string }) => (
  <Ico w={w} h={h} box="0 0 10 11">
    <path d="M1 3V9C1 11 9 11 9 9V3z" fill={fill} />
    <ellipse cx="5" cy="2.500" rx="4" ry="1.700" fill="#ffe3c4" stroke={fill} />
  </Ico>
);

/* ---------- ribbon parts ---------- */

const Picker = ({ value, label, w, h, edge, bg, arrowEdge, bold, radius, vivid }: {
  value: string; label: string; w?: number; h?: number; edge?: string; bg?: string;
  arrowEdge?: string; bold?: boolean; radius?: number; vivid?: boolean;
}) => (
  <Combo $w={w} $h={h} $edge={edge} $bg={bg} $radius={radius}>
    <Select aria-label={label} $bold={bold}>
      <option>{value}</option>
    </Select>
    <DropArrow $edge={arrowEdge} $vivid={vivid}><Caret /></DropArrow>
  </Combo>
);

const styledLetter = (ch: string, extra: React.SVGProps<SVGTextElement>) => (
  <Ico w={14} h={16}>
    <text x="7" y="13" textAnchor="middle" fontFamily="DejaVu Serif" fontWeight="700" fontSize="13" fill="#2b3a57" {...extra}>{ch}</text>
  </Ico>
);

const all = (n: number) => [n, n, n, n, n];

function RibbonBar() {
  return (
    <Ribbon>
      <Group $w={55}>
        <BigRow><BigButton><SaveIcon />Spara</BigButton></BigRow>
        <GroupName>Report</GroupName>
      </Group>
      <Group $w={236}>
        <BigRow>
          <BigButton disabled><CutIcon />Cut</BigButton>
          <BigButton disabled><CopyIcon />Copy</BigButton>
          <BigButton><PasteIcon />Paste</BigButton>
          <RibbonRule />
          <BigButton disabled><UndoIcon />Undo</BigButton>
          <BigButton disabled><UndoIcon flip />Redo</BigButton>
        </BigRow>
        <GroupName>Edit</GroupName>
      </Group>
      <Group $w={242}>
        <ToolGrid $pad={11}>
          <ToolRow>
            <Picker label="Font name" value="Arial" w={140} bg="#edf4fd" />
            <ToolGap $w={1} />
            <ToolButton aria-label="Highlight colour">
              <Ico w={16} h={18}>
                <rect x="0" y="0" width="16" height="12" rx="1" fill="#4a5f8c" />
                <text x="8" y="9" textAnchor="middle" fontFamily="DejaVu Sans Condensed" fontSize="9" fill="#fff">ab</text>
                <rect x="0" y="14" width="3" height="3" fill="#e2574c" />
                <rect x="4" y="14" width="3" height="3" fill="#ee9c26" />
                <rect x="8" y="14" width="3" height="3" fill="#7fae35" />
                <rect x="12" y="14" width="3" height="3" fill="#4d9bd6" />
              </Ico>
            </ToolButton>
            <ToolGap $w={2} />
            <Caret w={5} />
            <ToolGap $w={5} />
            <ToolButton aria-label="Text colour">
              <Ico w={16} h={18}>
                <text x="8" y="12" textAnchor="middle" fontFamily="Open Sans" fontWeight="700" fontSize="15" fill="#4a5f8c">A</text>
                <rect x="0" y="14" width="15" height="3" fill="#000" />
              </Ico>
            </ToolButton>
            <ToolGap $w={2} />
            <Caret w={5} />
          </ToolRow>
          <ToolRow>
            <Picker label="Font size" value="9,75" w={50} bg="#edf4fd" />
            <ToolGap $w={2} />
            <ToolButton aria-label="Bold">{styledLetter('B', {})}</ToolButton>
            <ToolButton aria-label="Italic">{styledLetter('I', { fontStyle: 'italic' })}</ToolButton>
            <ToolButton aria-label="Underline">{styledLetter('U', { textDecoration: 'underline' })}</ToolButton>
            <ToolGap $w={3} />
            <ToolButton aria-label="Align left" $on>{textLines(all(0), [12, 8, 12, 8, 12])}</ToolButton>
            <ToolButton aria-label="Align centre">{textLines([0, 2, 0, 2, 0], [12, 10, 12, 10, 12])}</ToolButton>
            <ToolButton aria-label="Align right">{textLines([0, 4, 0, 4, 0], all(12))}</ToolButton>
            <ToolButton aria-label="Justify">{textLines(all(0), all(12))}</ToolButton>
          </ToolRow>
        </ToolGrid>
        <GroupName>Font</GroupName>
      </Group>
      <Group $w={116}>
        <ToolGrid $pad={11}>
          {alignIcons.map((row, i) => (
            <ToolRow key={i}>
              {row.map((icon, j) => <ToolButton key={j} disabled aria-label={`Align ${i * 4 + j + 1}`}>{icon}</ToolButton>)}
            </ToolRow>
          ))}
        </ToolGrid>
        <GroupName>Alignment</GroupName>
      </Group>
      <Group $w={212}>
        <ToolGrid $pad={11}>
          {layoutIcons.map((row, i) => (
            <ToolRow key={i}>
              {row.map((icon, j) => (
                <React.Fragment key={j}>
                  {j === 4 && <ToolGap $w={3} />}
                  <ToolButton disabled aria-label={`Layout ${i * 8 + j + 1}`}>{icon}</ToolButton>
                </React.Fragment>
              ))}
            </ToolRow>
          ))}
        </ToolGrid>
        <GroupName>Layout</GroupName>
      </Group>
      <Group $w={163}>
        <BigRow>
          <BigButton $w={54}><ZoomIcon sign="out" />Zoom Out</BigButton>
          <BigButton $w={48}><ZoomIcon />Zoom<Caret w={5} /></BigButton>
          <BigButton $w={46}><ZoomIcon sign="in" />Zoom In</BigButton>
        </BigRow>
        <GroupName>Zoom</GroupName>
      </Group>
      <Group $w={66}>
        <BigRow><BigButton $w={50}><WindowsIcon />Windows<Caret w={5} /></BigButton></BigRow>
        <GroupName>View</GroupName>
      </Group>
      <Group $w={55}>
        <BigRow><BigButton><ScriptsIcon />Scripts</BigButton></BigRow>
        <GroupName>Scripts</GroupName>
      </Group>
      <Collapse>
        <PlainButton aria-label="Collapse ribbon">
          <Ico w={11} h={10}><path d="M1.500 5L5.500 1L9.500 5V7.500H8L5.500 5L3 7.500H1.500zM3 8.500L5.500 6L8 8.500" stroke="#4c5a80" fill="#fff" /></Ico>
        </PlainButton>
      </Collapse>
    </Ribbon>
  );
}

/* ---------- rulers ---------- */

function HorizontalRuler() {
  const marks = Array.from({ length: 69 }, (_, i) => i - 8);
  return (
    <Ico w={822} h={14}>
      <rect x=".5" y=".5" width="815" height="13" fill="#dfebf8" stroke={c.line} />
      <rect x=".5" y=".5" width="95" height="13" fill="#c6d9f0" stroke={c.line} />
      <rect x="720.500" y=".5" width="95" height="13" fill="#c6d9f0" stroke={c.line} />
      {marks.map((m) => {
        const x = 96 + m * 12;
        if (m === 0) return null;
        if (m % 8 === 0 && m <= 56)
          return <text key={m} x={x} y="11" textAnchor="middle" fontFamily="Liberation Sans" fontSize="10" fill="#2e3f5c">{Math.abs(m / 8)}</text>;
        return <rect key={m} x={x} y={m % 4 === 0 ? 4 : 6} width="1" height={m % 4 === 0 ? 6 : 2} fill="#1e395b" />;
      })}
    </Ico>
  );
}

function VerticalRuler({ h, dark = false, end = false }: { h: number; dark?: boolean; end?: boolean }) {
  const marks = Array.from({ length: Math.floor((h - 1) / 12) }, (_, i) => i + 1);
  return (
    <Ico w={14} h={h}>
      <rect x=".5" y=".5" width="13" height={h - 1} fill={dark ? '#c6d9f0' : '#dfebf8'} stroke={c.line} />
      {marks.map((m) => (
        <rect key={m} x={m % 4 === 0 ? 4 : 6} y={m * 12 - 1} width={m % 4 === 0 ? 6 : 2} height="1" fill="#1e395b" />
      ))}
      {end && <text x="7" y={h + 2} textAnchor="middle" fontFamily="Liberation Sans" fontSize="10" fill="#2e3f5c">1</text>}
    </Ico>
  );
}

const Grip = () => (
  <VGrip>
    <Ico w={6} h={8}><path d="M0 .5H6M0 2.500H6M0 4.500H6M0 6.500H6" stroke="#7f92ae" /></Ico>
  </VGrip>
);

/* ---------- report page ---------- */

const BandTitle = ({ icon, name }: { icon: React.ReactNode; name: string }) => (
  <BandHead>
    <Ico w={7} h={7}><path d="M0 0H7L3.500 6z" fill="#6a6a6a" /></Ico>
    {icon}
    <BandName>{name}</BandName>
  </BandHead>
);

const Cols = () => (
  <colgroup><col width="105" /><col width="166" /><col width="166" /><col /></colgroup>
);

function ReportPage() {
  return (
    <Paper>
      <Margin $side="left"><MarginPart $dashed /><MarginPart $dashed /><MarginPart /></Margin>
      <div>
        <Band $h={96} />
        <BandTitle icon={pageBand.report} name="ReportHeader [one band per report]" />
        <Band $h={58}><ReportTitle>Prenumerations exempel</ReportTitle></Band>
        <BandTitle icon={pageBand.header} name="GroupHeader2 ( Level 2 )" />
        <HeaderTable>
          <Cols />
          <tbody><tr>{['Identifier', 'Case Start Date', 'Case Stop Date', 'Media Type Name'].map((t) => <th key={t} scope="col">{t}</th>)}</tr></tbody>
        </HeaderTable>
        <BandTitle icon={pageBand.header} name="GroupHeader1 ( Level 1 )" />
        <Band $h={26}>
          <GroupTable>
            <colgroup><col width="77" /><col /></colgroup>
            <tbody><tr><th scope="row">INBOX NAME</th><td>[InboxName]<Bound $light><DbIcon /></Bound></td></tr></tbody>
          </GroupTable>
        </Band>
        <BandTitle icon={pageBand.detail} name="Detail" />
        <Band $h={24}>
          <DetailTable>
            <Cols />
            <tbody><tr>{['[Identifier]', '[CaseStartDate]', '[CaseStopDate]', '[MediaTypeName]'].map((t) => <td key={t}>{t}<Bound><DbIcon /></Bound></td>)}</tr></tbody>
          </DetailTable>
        </Band>
        <BandTitle icon={pageBand.footer} name="GroupFooter1 ( Level 0 )" />
        <Band $h={6}><FooterRule /><DashRule /></Band>
        <Band $h={95}>
          <FooterCells><FooterCell>den 3 mars 2022</FooterCell><FooterCell $end>Page 1 of 1</FooterCell></FooterCells>
        </Band>
      </div>
      <Margin $side="right"><MarginPart $dashed /><MarginPart $dashed /><MarginPart /></Margin>
    </Paper>
  );
}

function Designer() {
  return (
    <>
      <DocTabs>
        <DocTab>XtraReport<PlainButton aria-label="Close tab">{closeIcon}</PlainButton></DocTab>
        <DocMenu aria-label="Documents"><Caret fill="#1f48a8" w={8} /></DocMenu>
      </DocTabs>
      <Canvas>
        <Ico w={14}><path d="M12 3V12H3z" fill="#7c96b8" /></Ico>
        <HRuler><HorizontalRuler /></HRuler>
        <span />
        <VRuler>
          <VerticalRuler h={96} dark end />
          <Grip /><VerticalRuler h={58} />
          <Grip /><VerticalRuler h={27} />
          <Grip /><VerticalRuler h={26} />
          <Grip /><VerticalRuler h={24} />
          <Grip /><VerticalRuler h={6} />
          <VerticalRuler h={96} dark end />
        </VRuler>
        <ReportPage />
        <SmartTag aria-label="Report tasks">
          <Ico w={16}>
            <circle cx="8" cy="8" r="3.700" stroke="#666" strokeWidth="3" />
            <path d="M8 1V4M8 12V15M1 8H4M12 8H15M3 3L5 5M11 11L13 13M13 3L11 5M5 11L3 13" stroke="#666" strokeWidth="2.200" />
          </Ico>
        </SmartTag>
      </Canvas>
    </>
  );
}

function GroupSort() {
  return (
    <BottomPanel>
      <PanelHead><PanelTitle>Group and Sort</PanelTitle><PlainButton aria-label="Pin">{pinIcon}</PlainButton><PlainButton aria-label="Close">{closeIcon}</PlainButton></PanelHead>
      <Toolbar>
        <ToolbarButton>
          <Ico w={13} h={13}><path d="M0 0H8V3H3V8H0z" fill={c.sky} /><path d="M10 .5H12.500V3M.5 10V12.500H3" stroke={c.sky} /><rect x="4" y="4" width="9" height="9" fill={c.green} /></Ico>
          Add a Group<MenuCaret><Caret fill={c.text} w={6} /></MenuCaret>
        </ToolbarButton>
        <ToolbarButton>
          <Ico w={13} h={13}><path d="M0 0H8L4 6.500z" fill={c.sky} /><path d="M4 12.500H13L8.500 5z" fill={c.green} /></Ico>
          Add a Sort<MenuCaret><Caret fill={c.text} w={6} /></MenuCaret>
        </ToolbarButton>
        <ToolbarButton>
          <Ico w={12} h={12}><path d="M1 1L11 11M11 1L1 11" stroke={c.red} strokeWidth="2" /></Ico>
          Delete
        </ToolbarButton>
        <ToolbarRule />
        <ToolbarButton disabled>
          <Ico w={14} h={14}><circle cx="7" cy="7" r="7" fill="#a1abb9" /><path d="M7 11V4M4 7L7 4L10 7" stroke="#e6edf6" strokeWidth="2" /></Ico>
          Move Up
        </ToolbarButton>
        <ToolbarButton disabled>
          <Ico w={14} h={14}><circle cx="7" cy="7" r="7" fill="#a1abb9" /><path d="M7 3V10M4 7L7 10L10 7" stroke="#e6edf6" strokeWidth="2" /></Ico>
          Move Down
        </ToolbarButton>
      </Toolbar>
      <TableArea>
        <FieldTable>
          <colgroup><col width="227" /><col width="92" /><col width="92" /><col width="92" /></colgroup>
          <thead><tr><th>Field Name</th><th>Sort Order</th><th>Show Header</th><th>Show Footer</th></tr></thead>
          <tbody>
            <tr>
              <td><FieldCell><Select aria-label="Field name"><option>InboxName</option></Select><CellArrow><Caret /></CellArrow></FieldCell></td>
              <td>Ascending</td>
              <td><Check type="checkbox" defaultChecked aria-label="Show header" /></td>
              <td><Check type="checkbox" aria-label="Show footer" /></td>
            </tr>
          </tbody>
        </FieldTable>
      </TableArea>
      <TabStrip>
        <StripTab $active>
          <Ico w={15} h={13}><rect width="9" height="9" fill={c.sky} /><path d="M5 4H15L10 13z" fill={c.green} stroke={c.panel} strokeWidth=".8" /></Ico>
          Group and Sort
        </StripTab>
        <StripTab>
          <Ico w={15} h={15}><path d="M8 13.500H.5V.5H13.500V8" stroke={c.blue} /><rect width="14" height="3" fill={c.sky} /><path d="M5 6L3 8.500L5 11" stroke={c.blue} /><circle cx="11" cy="11" r="4" fill={c.red} /><path d="M9.500 9.500L12.500 12.500M12.500 9.500L9.500 12.500" stroke="#fff" /></Ico>
          Report Design Analyzer
        </StripTab>
      </TabStrip>
    </BottomPanel>
  );
}

/* ---------- right panels ---------- */

type Node = { name: string; level: number; icon: React.ReactNode; toggle?: 'open' | 'closed' };
const style = (name: string): Node => ({ name, level: 1, icon: <StyleIcon /> });
const tree: Node[] = [
  { name: 'XtraReport', level: 0, icon: <ReportIcon />, toggle: 'open' },
  { name: 'TopMargin', level: 1, icon: <MarginIcon /> },
  { name: 'ReportHeader', level: 1, icon: treeBand.report, toggle: 'closed' },
  { name: 'GroupHeader2', level: 1, icon: treeBand.header, toggle: 'closed' },
  { name: 'GroupHeader1', level: 1, icon: treeBand.header, toggle: 'closed' },
  { name: 'Detail', level: 1, icon: treeBand.detail, toggle: 'closed' },
  { name: 'GroupFooter1', level: 1, icon: treeBand.footer, toggle: 'closed' },
  { name: 'BottomMargin', level: 1, icon: <MarginIcon bottom />, toggle: 'closed' },
  { name: 'Styles', level: 0, icon: <StyleIcon stack />, toggle: 'open' },
  ...['DetailCaption1', 'DetailData1', 'DetailData3_Odd', 'GroupCaption1', 'GroupData1', 'GroupFooterBackground3', 'PageInfo', 'Title'].map(style),
  { name: '', level: 0, icon: <DbIcon w={14} h={16} fill={c.orange} /> },
];

function PanelButtons() {
  return (
    <>
      <PlainButton aria-label="Maximise">{maxIcon}</PlainButton>
      <PlainButton aria-label="Pin">{pinIcon}</PlainButton>
      <PlainButton aria-label="Close">{closeIcon}</PlainButton>
    </>
  );
}

function Explorer() {
  return (
    <HalfPanel>
      <PanelHead><PanelTitle>Report Explorer</PanelTitle><PanelButtons /></PanelHead>
      <TreeArea>
        <Tree>
          {tree.map((n, i) => (
            <TreeRow key={i} $level={n.level} $selected={i === 0}>
              <TreeToggle>
                {n.toggle && (
                  <Ico w={9} h={9}>
                    <path d={n.toggle === 'open' ? 'M1.500 3L4.500 6L7.500 3' : 'M3 1.500L6 4.500L3 7.500'} stroke="#4c5a80" strokeWidth="2" />
                  </Ico>
                )}
              </TreeToggle>
              {n.icon}
              {n.name}
            </TreeRow>
          ))}
        </Tree>
        <ScrollBar>
          <ScrollEnd aria-label="Scroll up"><Caret up w={9} /></ScrollEnd>
          <ScrollThumb><Ico w={7} h={8}><path d="M0 .5H7M0 2.500H7M0 4.500H7M0 6.500H7" stroke="#7c9cc9" /></Ico></ScrollThumb>
          <ScrollEnd aria-label="Scroll down"><Caret w={9} /></ScrollEnd>
        </ScrollBar>
      </TreeArea>
      <TabStrip>
        <StripTab $active>
          <Ico w={14} h={14}><path d="M5 1H10V6H5zM0 9H5V13H0zM9 9H14V13H9z" fill={c.orange} /><path d="M7.500 6V7.500M2.500 9V7.500H11.500V9" stroke={c.blue} /></Ico>
          Report Explorer
        </StripTab>
        <StripTab>
          <Ico w={15} h={14}>
            <path d="M1 2C1 0 11 0 11 2V4C11 6 1 6 1 4zM1 6C3 7 5 7 8 6.500V9C5 9.500 1 9 1 7.500zM1 10C2 11 4 11 5 11V13C3 13 1 13 1 11.500z" fill={c.orange} />
            <path d="M6.500 7.500H14.500V13.500H6.500zM8 9.500H13M8 11.500H13" stroke={c.blue} />
          </Ico>
          Field List
        </StripTab>
        <Badge>4</Badge>
      </TabStrip>
    </HalfPanel>
  );
}

const ColourEditor = ({ label, checker }: { label: string; checker?: boolean }) => (
  <Combo $h={22} $edge="#6c6c6c">
    <Swatch $checker={checker} />
    <SwatchButton aria-label={`${label} picker`}>
      <Ico w={14} h={14}><path d="M7 0H14V7A7 7 0 1 1 7 0z" fill={c.blue} /><circle cx="7" cy="7" r="5.500" fill="#dfe9f5" /><circle cx="7" cy="7" r="4" fill="#7ea3e2" /><circle cx="5.500" cy="5.500" r="1.300" fill="#d5e3fb" /></Ico>
    </SwatchButton>
    <SwatchArrow aria-label={`${label} list`}><Caret /></SwatchArrow>
  </Combo>
);

const Spinner = ({ value, w, label }: { value: string; w: number; label: string }) => (
  <Combo $w={w} $h={22} $edge="#6c6c6c">
    <TextInput defaultValue={value} aria-label={label} />
    <SpinButtons>
      <SpinButton aria-label={`${label} up`}><Caret up w={5} /></SpinButton>
      <SpinButton aria-label={`${label} down`}><Caret w={5} /></SpinButton>
    </SpinButtons>
  </Combo>
);

const BorderIcon = ({ d }: { d: string }) => (
  <Ico w={14} h={14}>
    <path d="M.5 .5H13.500V13.500H.5zM7.500 0V14M0 7.500H14" stroke={c.pale} strokeDasharray="1 1" />
    <path d={d} stroke={c.blue} />
  </Ico>
);

const ClippedBox = styled(Combo)`
  border-color: #9aa7ba;
  background: #dde7f3;
  input { color: #7f8ca3; }
`;

const Prop = ({ name, id, children, marker = true }: { name?: string; id?: string; children: React.ReactNode; marker?: boolean }) => (
  <PropRow>
    {name ? <PropName htmlFor={id}>{name}</PropName> : <span />}
    <PropEditor>{children}</PropEditor>
    {marker && <Marker />}
  </PropRow>
);

function Properties() {
  return (
    <HalfPanel $ruled>
      <PanelHead><PanelTitle>Properties</PanelTitle><PanelButtons /></PanelHead>
      <ObjectPicker><Picker label="Object" value={'XtraReport\u00a0\u00a0\u00a0Report'} h={22} bold /></ObjectPicker>
      <CategoryTabs>
        <CategoryTab $active aria-label="Appearance">
          <Ico w={20} h={20}><path d="M13 4L17 0L20 3L16 8z" fill={c.red} /><path d="M9 8L12.500 5L15 8L12 11z" fill={c.blue} /><path d="M0 19C3 16 1 12 6 10C8 9 11 12 10 14C9 18 5 19 0 19z" fill={c.orange} /></Ico>
        </CategoryTab>
        <CategoryTab aria-label="Data">
          <Ico w={16} h={20}><path d="M1 3.500C1 0 15 0 15 3.500C15 7 1 7 1 3.500zM1 6.500C4 9 12 9 15 6.500V9.500C15 13 1 13 1 9.500zM1 12.500C4 15 12 15 15 12.500V16C15 19.500 1 19.500 1 16z" fill={c.orange} /></Ico>
        </CategoryTab>
        <CategoryTab aria-label="Layout">
          <Ico w={18} h={20}><rect x="6" y="7" width="11" height="12" stroke={c.blue} strokeWidth="2" /><path d="M5 2.500H18M6 .5V4.500M17 .5V4.500M2 6V20M0 6.500H4M0 19.500H4" stroke={c.sky} strokeWidth="1.500" /></Ico>
        </CategoryTab>
        <CategoryTab aria-label="Behaviour">
          <Ico w={20} h={20}><path d="M6 1C9 0 13 3 12 8L19 15C20.500 17 17.500 20 15.500 18.500L8 12C3 13 0 9 1 6L4.500 9L8 8L8.500 4.500z" fill={c.blue} /></Ico>
        </CategoryTab>
        <CategoryTab aria-label="More"><Caret w={8} fill="#66788f" /></CategoryTab>
      </CategoryTabs>
      <PropList>
        <Prop name="Background Color"><ColourEditor label="Background" checker /></Prop>
        <Prop name="Border Color"><ColourEditor label="Border" /></Prop>
        <Prop name="Border Dash Style"><Combo $h={22} $edge="#6c6c6c"><DashSample /><DropArrow><Caret /></DropArrow></Combo></Prop>
        <Prop name="Border Width" id="border-width">
          <Slider id="border-width" type="range" min={0} max={10} defaultValue={1} $w={74} />
          <Spinner value="1" w={40} label="Border width" />
        </Prop>
        <Prop name="Borders">
          <BorderButtons>
            <PlainButton aria-label="Left border"><BorderIcon d="M.5 0V14" /></PlainButton>
            <PlainButton aria-label="Top border"><BorderIcon d="M0 .5H14" /></PlainButton>
            <PlainButton aria-label="Right border"><BorderIcon d="M13.500 0V14" /></PlainButton>
            <PlainButton aria-label="Bottom border"><BorderIcon d="M0 13.500H14" /></PlainButton>
          </BorderButtons>
          <CornerMark />
        </Prop>
        <Prop name="Font"><Picker label="Font family" value="Arial" h={22} edge="#6c6c6c" /></Prop>
        <Prop marker={false}>
          <Spinner value="9,75" w={60} label="Size" />
          <PlainButton aria-label="Bold">
            <Ico w={14} h={16}><text x="7" y="14" textAnchor="middle" fontFamily="DejaVu Serif" fontWeight="700" fontSize="15" fill={c.blue}>B</text></Ico>
          </PlainButton>
          <ToolGap $w={16} />
          <CornerMark />
        </Prop>
        <Prop name="Foreground Color"><ColourEditor label="Foreground" /></Prop>
        <Prop name="Padding" id="padding"><Combo $h={22} $edge="#6c6c6c"><TextInput id="padding" defaultValue="0; 0; 0; 0" /></Combo></Prop>
        <Prop marker={false}>
          <Ico w={18} h={12}><path d="M3 1V11M15 6H6M9.500 2L5.500 6L9.500 10" stroke={c.pale} strokeWidth="2" /></Ico>
          <ClippedBox $w={32} $h={22}><TextInput aria-label="Left padding" defaultValue="0" /></ClippedBox>
          <Ico w={18} h={12}><path d="M15 1V11M3 6H12M8.500 2L12.500 6L8.500 10" stroke={c.pale} strokeWidth="2" /></Ico>
          <ClippedBox $w={32} $h={22}><TextInput aria-label="Right padding" defaultValue="0" /></ClippedBox>
        </Prop>
      </PropList>
    </HalfPanel>
  );
}

/* ---------- page ---------- */

const ZoomButtonIcon = ({ plus = false }: { plus?: boolean }) => (
  <Ico w={16}>
    <circle cx="8" cy="8" r="7.300" fill="#eef1f5" stroke="#6f7580" />
    <path d={plus ? 'M4 8H12M8 4V12' : 'M4 8H12'} stroke="#555b66" strokeWidth="2" />
  </Ico>
);

export default function App() {
  return (
    <Window>
      <GlobalStyle />
      <TitleBar>
        <QuickAccess>
          <Ico w={16}>
            <path d="M1.500 .5H11L15.500 4.500V15.500H1.500z" fill="#f5f7fa" stroke="#777f8c" />
            <path d="M5 6V13M8 9V13M11 7V13" stroke="#3c7cc4" strokeWidth="2" />
          </Ico>
          <PlainButton aria-label="Customise quick access">
            <Ico w={7} h={8}><path d="M0 1.500H5" stroke="#4c5a75" /><path d="M0 4H5L2.500 7z" fill="#4c5a75" /></Ico>
          </PlainButton>
        </QuickAccess>
        <WindowTitle>XtraReport - ReportBuilder</WindowTitle>
        <WindowButtons>
          <PlainButton aria-label="Full screen"><Ico w={15} h={10}><path d="M4 .5H1.500V9.500H4M11 .5H13.500V9.500H11" stroke="#55617e" strokeDasharray="3 1" /><rect x="4.500" y="3" width="6" height="4" fill="#fff" stroke="#55617e" /></Ico></PlainButton>
          <PlainButton aria-label="Minimise"><Ico w={12} h={10}><rect x=".7" y="5" width="10" height="4" rx="1" fill="#fff" stroke="#55617e" /></Ico></PlainButton>
          <PlainButton aria-label="Restore"><Ico w={12} h={10}><rect x=".7" y=".7" width="10" height="8.500" rx="1" fill="#fff" stroke="#55617e" /><rect x="4" y="3.500" width="3.500" height="2.500" stroke="#55617e" /></Ico></PlainButton>
          <PlainButton aria-label="Close window"><Ico w={12} h={10}><path d="M1 1L11 9M11 1L1 9" stroke="#55617e" strokeWidth="4" /><path d="M1.700 1.500L10.300 8.500M10.300 1.500L1.700 8.500" stroke="#fff" strokeWidth="1.500" /></Ico></PlainButton>
        </WindowButtons>
      </TitleBar>
      <Body>
        <RibbonTabs>
          <FileButton aria-label="File">
            <Ico w={14} h={14}><rect x=".5" y=".5" width="12" height="13" fill="#fff" stroke="#5a5038" /><path d="M3.500 1V13M5 3H11M5 5H11M5 7H11M5 9H11M5 11H11" stroke="#5a5038" /></Ico>
            <Caret w={5} fill="#8b7a45" />
          </FileButton>
          <RibbonTab $active>Report Designer</RibbonTab>
          <RibbonTab>Print Preview</RibbonTab>
          <RibbonTab>HTML View</RibbonTab>
        </RibbonTabs>
        <RibbonBar />
        <Main>
          <Panel $w={200}>
            <PanelHead><PanelTitle>Egenskaper</PanelTitle><PlainButton aria-label="Pin">{pinIcon}</PlainButton><PlainButton aria-label="Close">{closeIcon}</PlainButton></PanelHead>
            <Field $gap={4}>
              Namn
              <Combo $edge="#9dbde0" $radius={2}><TextInput defaultValue="Prenumerations exempel" /></Combo>
            </Field>
            <Field $gap={9}>
              Kundgrupp
              <Picker label="Kundgrupp" value="Standard kundgrupp" w={125} h={19} edge="#9dbde0" arrowEdge="#9dbde0" radius={2} vivid />
            </Field>
          </Panel>
          <Panel $w={190}>
            <PanelHead><PanelTitle>Toolbox</PanelTitle><PlainButton aria-label="Pin">{pinIcon}</PlainButton><PlainButton aria-label="Close">{closeIcon}</PlainButton></PanelHead>
            <ToolboxScroll aria-label="Previous tools"><Caret up w={5} fill="#9fb2cc" /></ToolboxScroll>
            <ToolboxGroup>Standard Controls<Ico w={9} h={6}><path d="M1 5L4.500 1.500L8 5" stroke="#4c5a80" strokeWidth="1.800" /></Ico></ToolboxGroup>
            <ToolboxList>
              {Object.entries(toolIcons).map(([name, icon], i) => (
                <li key={name}>
                  <ToolboxItem $link={i === 0}><Ico w={32}>{icon}</Ico>{name}</ToolboxItem>
                </li>
              ))}
            </ToolboxList>
            <ToolboxScroll aria-label="More tools"><Caret w={5} fill="#6d83a8" /></ToolboxScroll>
          </Panel>
          <Center>
            <Designer />
            <GroupSort />
          </Center>
          <RightSide>
            <Explorer />
            <Properties />
          </RightSide>
        </Main>
        <StatusBar>
          <StatusCell>{'XtraReport { PaperKind: Letter }'}</StatusCell>
          <StatusRule />
          <ZoomBox>
            <StatusRule />
            <ZoomValue>100%</ZoomValue>
            <PlainButton aria-label="Zoom out"><ZoomButtonIcon /></PlainButton>
            <Slider type="range" aria-label="Zoom" defaultValue={50} $w={94} />
            <PlainButton aria-label="Zoom in"><ZoomButtonIcon plus /></PlainButton>
            <ToolGap $w={1} />
            <Ico w={11} h={20}><path d="M8 8h2v2h-2zM4 12h2v2h-2zM8 12h2v2h-2zM0 16h2v2h-2zM4 16h2v2h-2zM8 16h2v2h-2z" fill="#7f95b5" /></Ico>
          </ZoomBox>
        </StatusBar>
      </Body>
    </Window>
  );
}
